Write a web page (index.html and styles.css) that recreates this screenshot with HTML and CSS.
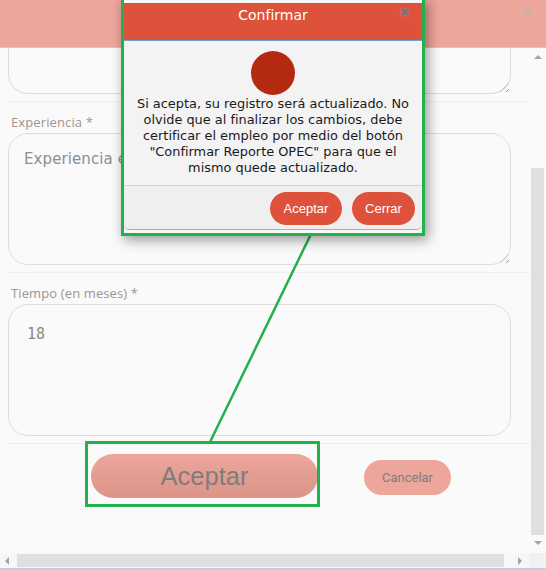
FILE: index.html
```html
<!DOCTYPE html>
<html lang="es">
<head>
<meta charset="utf-8">
<title>Confirmar</title>
<link rel="stylesheet" href="styles.css">
</head>
<body>
<div class="window">
  <header class="topbar"><span class="topbar-x">✖</span></header>
  <div class="middle">
    <main class="content">
      <div class="field field-stub"><div class="box box-stub"><i class="grip"></i></div></div>
      <div class="field">
        <label class="label">Experiencia *</label>
        <div class="box box-exp"><span class="placeholder">Experiencia e</span><i class="grip"></i></div>
      </div>
      <div class="field">
        <label class="label">Tiempo (en meses) *</label>
        <div class="box box-time"><span class="value">18</span></div>
      </div>
      <div class="actions">
        <button class="btn-main">Aceptar</button>
        <button class="btn-cancel">Cancelar</button>
      </div>
    </main>
    <div class="vscroll">
      <span class="arrow arrow-up"></span>
      <div class="vthumb"></div>
      <span class="arrow arrow-down"></span>
    </div>
  </div>
  <div class="hscroll">
    <span class="arrow arrow-left"></span>
    <div class="hthumb"></div>
    <span class="arrow arrow-right"></span>
    <span class="corner"></span>
  </div>
</div>

<svg class="connector" width="546" height="570" viewBox="0 0 546 570"><line x1="311" y1="234" x2="210" y2="442" stroke="#22b14c" stroke-width="2.5"/></svg>
<div class="hl hl-btn"></div>

<div class="modal">
  <div class="modal-head"><span class="modal-title">Confirmar</span><span class="modal-x">✖</span></div>
  <div class="modal-body">
    <div class="dot"></div>
    <p class="msg">Si acepta, su registro será actualizado. No olvide que al finalizar los cambios, debe certificar el empleo por medio del botón "Confirmar Reporte OPEC" para que el mismo quede actualizado.</p>
  </div>
  <div class="modal-foot">
    <button class="btn-red btn-a">Aceptar</button>
    <button class="btn-red btn-c">Cerrar</button>
  </div>
</div>
</body>
</html>
```

FILE: styles.css
```css
* { box-sizing: border-box; }
html, body { margin: 0; height: 570px; overflow: hidden; background: #fafafa; }
body { position: relative; width: 546px; font-family: "Liberation Sans", sans-serif; }

.window { width: 546px; height: 570px; display: flex; flex-direction: column; border-bottom: 2px solid #bcd0e0; }
.topbar { height: 48px; flex: none; background: #eda69b; border-bottom: 1px solid #c6cbd8; display: flex; justify-content: flex-end; padding: 5px 14px 0 0; }
.topbar-x { font-size: 13px; line-height: 16px; color: #d0aeaa; font-family: "DejaVu Sans", sans-serif; }

.middle { flex: 1; display: flex; min-height: 0; }
.content { width: 529px; padding: 0 0 0 8px; overflow: hidden; }
.field { border-bottom: 1px solid #eeeeee; height: 171px; padding-top: 12px; }
.field-stub { height: 54px; padding-top: 0; }
.label { display: block; font-size: 13px; line-height: 16px; height: 20px; padding-left: 3px; color: #a0948f; font-family: "Open Sans", sans-serif; letter-spacing: 0.12px; }
.box { position: relative; width: 503px; border: 1px solid #dddde0; border-radius: 20px; background: #fafafa; padding: 15px; }
.box-stub { height: 46px; border-top: 0; border-top-left-radius: 0; border-top-right-radius: 0; }
.box-exp { height: 132px; margin-top: -1px; }
.box-time { height: 132px; margin-top: -1px; padding-left: 18px; }
.placeholder { font-size: 15px; line-height: 20px; color: #8d8d98; font-family: "DejaVu Sans", sans-serif; letter-spacing: 0.1px; }
.value { font-size: 15px; line-height: 28px; color: #8a8a80; font-family: "DejaVu Sans Mono", monospace; }
.grip { position: absolute; right: 1px; bottom: 1px; width: 9px; height: 9px; background: repeating-linear-gradient(135deg, transparent 0 2px, #999 2px 3px, transparent 3px 4px); clip-path: polygon(100% 0, 100% 100%, 0 100%); }

.actions { height: 74px; padding: 10px 0 0 83px; display: flex; align-items: flex-start; }
button { border: 0; padding: 0; cursor: pointer; }
.btn-main { width: 227px; height: 44px; border-radius: 22px; background: linear-gradient(#eda69b, #db9488); color: #7d7d7d; font-family: "Liberation Sans", sans-serif; font-size: 25.5px; }
.btn-cancel { width: 87px; height: 35px; margin: 6px 0 0 46px; border-radius: 18px; background: #eda69b; color: #7d7d7d; font-family: Roboto, sans-serif; font-size: 13px; }

.vscroll { width: 17px; display: flex; flex-direction: column; align-items: center; padding: 7px 0 0 0; background: #fafafa; }
.vthumb { width: 13px; height: 367px; margin-top: 109px; background: #dfdfdf; }
.hscroll { height: 15px; flex: none; display: flex; align-items: center; padding-left: 5px; background: #f7f7f7; }
.hthumb { width: 487px; height: 13px; margin-left: 8px; background: #dfdfdf; }
.corner { width: 17px; height: 15px; margin-left: auto; background: #f1f1f1; }
.arrow { width: 0; height: 0; flex: none; border: 4px solid transparent; }
.arrow-up { border-top: 0; border-bottom-color: #a3a3a3; }
.arrow-down { border-bottom: 0; border-top-color: #a3a3a3; margin-top: 6px; }
.arrow-left { border-left: 0; border-right-color: #a3a3a3; }
.arrow-right { border-right: 0; border-left-color: #a3a3a3; margin-left: 14px; }

.connector { position: absolute; left: 0; top: 0; pointer-events: none; }
.hl-btn { position: absolute; left: 85px; top: 441px; width: 235px; height: 66px; border: 3px solid #22b14c; }

.modal { position: absolute; left: 121px; top: -3px; width: 304px; height: 239px; border: 3px solid #22b14c; display: flex; flex-direction: column; background: #f7f7f7; box-shadow: 3px 4px 12px rgba(0,0,0,.4); }
.modal-head { height: 38px; flex: none; background: #de523b; border-bottom: 1px solid #6ea3cf; position: relative; margin-top: 3px; text-align: center; }
.modal-title { color: #fff; font-family: "DejaVu Sans", sans-serif; font-size: 14px; line-height: 24px; }
.modal-x { position: absolute; right: 12px; top: 2px; font-size: 13px; line-height: 16px; color: #8a6a76; text-shadow: 0 0 1px #e7a79b; font-family: "DejaVu Sans", sans-serif; }
.modal-body { height: 144px; flex: none; padding: 10px 8px 0; text-align: center; background: #f3f3f3; }
.dot { width: 44px; height: 44px; border-radius: 50%; background: #b32a10; margin: 0 auto 1px; }
.msg { margin: 0; font-family: "DejaVu Sans", sans-serif; font-size: 12.9px; line-height: 16px; color: #1a1a1a; }
.modal-foot { height: 45px; flex: none; background: #efefef; border-top: 1px solid #d3d3d3; border-bottom: 1px solid #9fb2c4; display: flex; justify-content: flex-end; align-items: flex-start; gap: 10px; padding: 6px 7px 0 0; border-radius: 0 0 5px 5px; }
.btn-red { height: 33px; border-radius: 17px; background: #de523b; color: #fff; font-family: "Liberation Sans", sans-serif; font-size: 13px; }
.btn-a { width: 72px; }
.btn-c { width: 63px; }
```
